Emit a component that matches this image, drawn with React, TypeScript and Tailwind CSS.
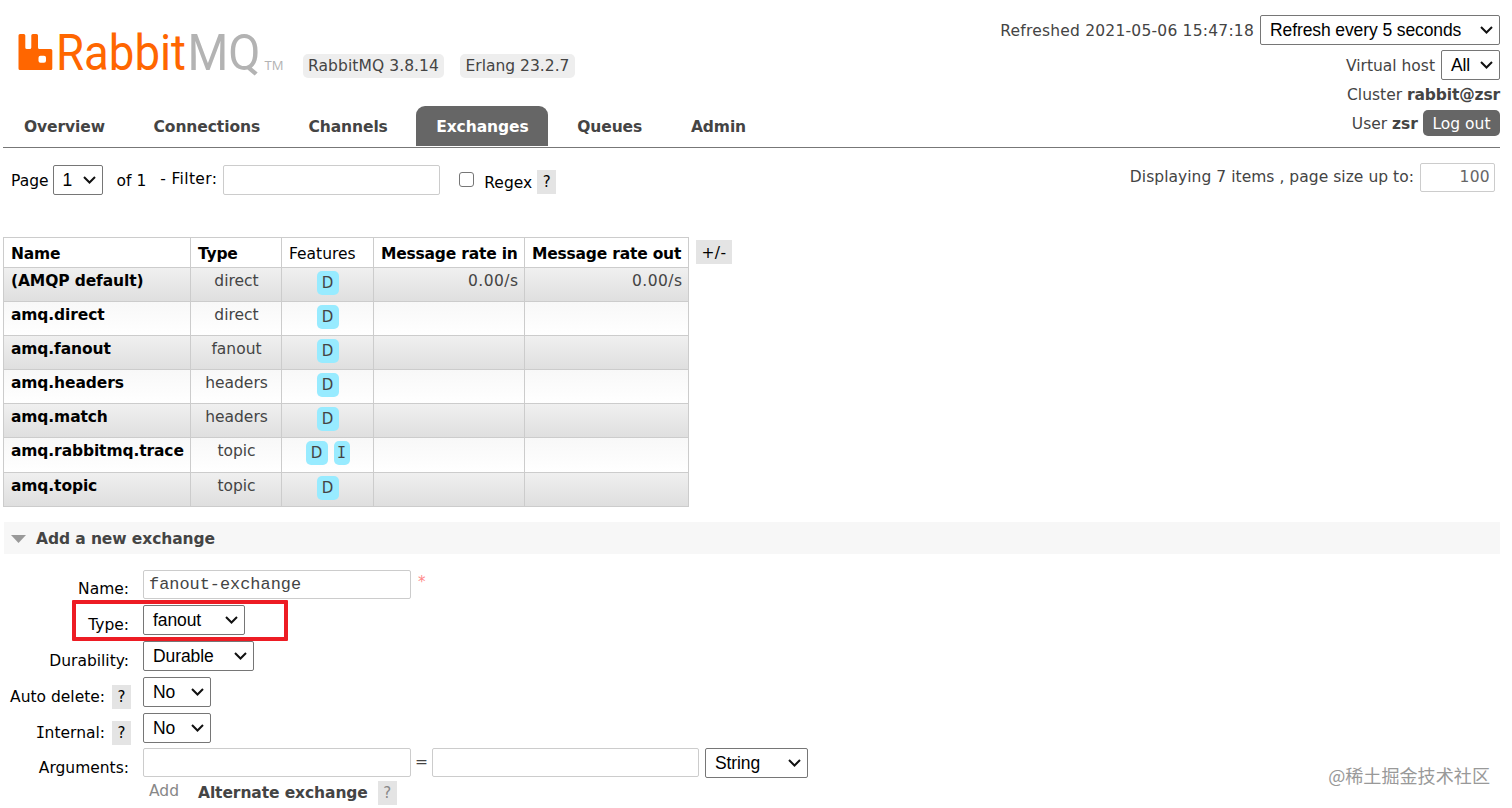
import type { ReactNode } from "react";

const tabs = [
  { label: "Overview", className: "w-[121px]" },
  { label: "Connections", className: "w-[146px]" },
  { label: "Channels", className: "w-[119px]" },
  { label: "Exchanges", className: "w-[132px]", active: true },
  { label: "Queues", className: "w-[105px]" },
  { label: "Admin", className: "w-[95px]" },
];

const exchanges = [
  { name: "(AMQP default)", type: "direct", features: ["D"], rateIn: "0.00/s", rateOut: "0.00/s" },
  { name: "amq.direct", type: "direct", features: ["D"] },
  { name: "amq.fanout", type: "fanout", features: ["D"] },
  { name: "amq.headers", type: "headers", features: ["D"] },
  { name: "amq.match", type: "headers", features: ["D"] },
  { name: "amq.rabbitmq.trace", type: "topic", features: ["D", "I"] },
  { name: "amq.topic", type: "topic", features: ["D"] },
];

function Logo() {
  return (
    <svg width="270" height="70" viewBox="0 -10 270 70" className="-my-[10px]">
      <path
        fill="#ff6600"
        fillRule="evenodd"
        d="M4 4h3.800a1.500 1.500 0 0 1 1.500 1.500V17.500a1.500 1.500 0 0 0 1.500 1.500h3a1.500 1.500 0 0 0 1.500-1.500V5.500a1.500 1.500 0 0 1 1.500-1.500h3.700a1.500 1.500 0 0 1 1.500 1.500V17.500a1.500 1.500 0 0 0 1.500 1.500h11.300a1.500 1.500 0 0 1 1.500 1.500V38.500a1.500 1.500 0 0 1-1.500 1.500H4a1.500 1.500 0 0 1-1.500-1.500V5.500a1.500 1.500 0 0 1 1.500-1.500zM24.500 25.700a2 2 0 0 0-2 2v3a2 2 0 0 0 2 2h3.500a2 2 0 0 0 2-2v-3a2 2 0 0 0-2-2z"
      />
      <g fontFamily="Roboto, sans-serif" fontSize="50">
        <text x="40" y="40" fill="#ff6600" textLength="130" lengthAdjust="spacingAndGlyphs">Rabbit</text>
        <text x="171.500" y="40" fill="#b3b3b3" textLength="73" lengthAdjust="spacingAndGlyphs">MQ</text>
      </g>
      <text x="248.500" y="40" fill="#b3b3b3" fontFamily="Open Sans, sans-serif" fontSize="13" textLength="19" lengthAdjust="spacingAndGlyphs">TM</text>
    </svg>
  );
}

function Select({ children, className }: { children: ReactNode; className: string }) {
  return (
    <div className={`flex h-[30px] shrink-0 items-center justify-between rounded-[2px] border border-[#767676] bg-white pl-[9px] pr-[6px] font-['Liberation_Sans',sans-serif] text-[17.500px] tracking-[-0.1px] text-black ${className}`}>
      <span className="whitespace-nowrap">{children}</span>
      <svg width="13" height="8" viewBox="0 0 13 8" fill="none" stroke="#111" strokeWidth="2">
        <path d="M1 1l5.500 5.500L12 1" />
      </svg>
    </div>
  );
}

function Help({ className = "" }: { className?: string }) {
  return (
    <span className={`inline-flex h-6 w-[19px] shrink-0 items-center justify-center bg-[#e4e4e4] text-[15px] ${className}`}>?</span>
  );
}

// capital I with serifs, as in Verdana
function SerifI() {
  return <span className="-mx-[0.5px] font-['DejaVu_Sans_Mono',monospace]">I</span>;
}

function Field({ label, help, children }: { label: ReactNode; help?: boolean; children: ReactNode }) {
  return (
    <div className="flex h-[35.800px]">
      <div className="flex h-9 w-[129px] shrink-0 items-center justify-end gap-[7px] pt-1 text-black">
        <span>{label}</span>
        {help && <Help className="-mr-[2px]" />}
      </div>
      <div className="flex pl-[14px]">{children}</div>
    </div>
  );
}

export default function App() {
  return (
    <div className="relative h-[808px] w-[1512px] overflow-hidden bg-white font-['DejaVu_Sans',Verdana,sans-serif] text-[15.500px] leading-5 text-[#444]">
      <header className="mx-[3px] mr-3 flex h-[148px] justify-between border-b border-[#777]">
        <div className="flex flex-col justify-between">
          <div className="flex pl-[13px] pt-[30px]">
            <Logo />
            <div className="flex gap-4 pl-[17px] pt-6">
              <span className="flex h-6 w-[141px] items-center justify-center rounded-[5px] bg-[#eee] tracking-[0.08px]">RabbitMQ 3.8.14</span>
              <span className="flex h-6 w-[115px] items-center justify-center rounded-[5px] bg-[#eee]">Erlang 23.2.7</span>
            </div>
          </div>
          <nav className="mb-px flex gap-[8.800px] pl-px font-bold tracking-[-0.08px]">
            {tabs.map((tab) => (
              <a key={tab.label} className={`flex h-10 items-center justify-center rounded-t-[9px] pt-0.5 ${tab.className} ${tab.active ? "bg-[#666] text-white" : ""}`}>
                {tab.label}
              </a>
            ))}
          </nav>
        </div>
        <div className="flex flex-col items-end pt-[15px]">
          <div className="flex items-center gap-1.5">
            <span className="pt-0.5 tracking-[0.22px]">Refreshed 2021-05-06 15:47:18</span>
            <Select className="w-[240px]">Refresh every 5 seconds</Select>
          </div>
          <div className="mt-[5px] flex items-center gap-1.5">
            <span className="pt-0.5">Virtual host</span>
            <Select className="w-[59px]">All</Select>
          </div>
          <div className="mt-[5px]">Cluster <b className="tracking-[-0.14px]">rabbit@zsr</b></div>
          <div className="mt-[5px] flex items-center gap-[5px]">
            <span className="pt-0.5">User <b>zsr</b></span>
            <span className="flex h-[26px] w-[77px] items-center justify-center rounded-[5px] bg-[#666] pt-px text-white">Log out</span>
          </div>
        </div>
      </header>

      <div className="flex h-[89px] justify-between pl-[11px] pr-[17px] pt-[15px] text-black">
        <div className="flex">
          <span className="pt-2">Page</span>
          <Select className="ml-[4px] mt-[2px] w-[50px]">1</Select>
          <span className="ml-[14px] pt-2">of 1</span>
          <span className="ml-[14px] pt-1.5 tracking-[0.35px]">- Filter:</span>
          <div className="ml-[6px] mt-[2px] h-[30px] w-[217px] rounded-[2px] border border-[#ccc]" />
          <span className="ml-[19px] mt-[9px] h-[15px] w-[15px] rounded-[3px] border border-[#767676]" />
          <span className="ml-[10px] pt-[10px]">Regex</span>
          <Help className="ml-[5px] mt-[7px]" />
        </div>
        <div className="flex text-[#444]">
          <span className="pt-1 tracking-[0.04px]">Displaying 7 items , page size up to:</span>
          <div className="ml-1.5 h-[29px] w-[75px] rounded-[2px] border border-[#ccc] pr-1 pt-[3px] text-right tracking-[0.3px] text-[#666]">100</div>
        </div>
      </div>

      <div className="flex pl-[3px]">
        <table className="w-[686px] table-fixed border-collapse">
          <thead>
            <tr className="h-[30px] text-left tracking-[-0.2px] text-black">
              <th className="w-[187px] border border-[#ccc] px-[7px] pt-0.5">Name</th>
              <th className="w-[91px] border border-[#ccc] px-[7px] pt-0.5">Type</th>
              <th className="w-[92px] border border-[#ccc] px-[7px] pt-0.5 font-normal tracking-normal">Features</th>
              <th className="w-[151px] border border-[#ccc] px-[7px] pt-0.5 whitespace-nowrap">Message rate in</th>
              <th className="w-[164px] border border-[#ccc] px-[7px] pt-0.5 whitespace-nowrap">Message rate out</th>
            </tr>
          </thead>
          <tbody>
            {exchanges.map((x) => (
              <tr key={x.name} className="h-[34.100px] align-top odd:bg-linear-to-b odd:from-[#f0f0f0] odd:to-[#dfdfdf] even:bg-linear-to-b even:from-[#f8f8f8] even:to-white">
                <td className="border border-[#ccc] px-[7px] pt-[3px] font-bold tracking-[-0.12px] whitespace-nowrap text-black">{x.name}</td>
                <td className="border border-[#ccc] pt-[3px] pl-px text-center">{x.type}</td>
                <td className="border border-[#ccc] pt-[3px]">
                  <div className="flex justify-center gap-1.5">
                    {x.features.map((f) => (
                      <span key={f} className={`flex h-6 items-center justify-center rounded-[5px] bg-[#98ebff] text-[15px] ${f === "I" ? "w-4" : "w-[22px]"}`}>
                        {f === "I" ? <SerifI /> : f}
                      </span>
                    ))}
                  </div>
                </td>
                <td className="border border-[#ccc] px-[5.500px] pt-[3px] text-right tracking-[0.45px]">{x.rateIn}</td>
                <td className="border border-[#ccc] px-[5.500px] pt-[3px] text-right tracking-[0.45px]">{x.rateOut}</td>
              </tr>
            ))}
          </tbody>
        </table>
        <span className="ml-[7px] mt-[3px] flex h-6 w-[36px] items-center justify-center bg-[#e4e4e4] pt-0.5 tracking-[0.4px] text-black">+/-</span>
      </div>

      <h2 className="mx-[4px] mr-3 mt-[15.400px] flex h-8 items-center gap-[10px] bg-[#f7f7f7] pl-[7px] pt-px font-bold tracking-[-0.09px]">
        <svg width="15" height="8" viewBox="0 0 15 8" fill="#999"><path d="M0 0h15L7.500 8z" /></svg>
        Add a new exchange
      </h2>

      <form className="relative pt-[15.300px]">
        <Field label="Name:">
          <div className="mt-[0.7px] h-[29px] w-[268px] rounded-[2px] border border-[#ccc] pl-[5px] pt-1 font-['Liberation_Mono',monospace] text-[16.900px]">fanout-exchange</div>
          <span className="ml-[7px] pt-[3px] text-[15px] text-[#f88]">*</span>
        </Field>
        <Field label="Type:"><Select className="w-[102px]">fanout</Select></Field>
        <Field label="Durability:"><Select className="w-[111px]">Durable</Select></Field>
        <Field label="Auto delete:" help><Select className="w-[68px]">No</Select></Field>
        <Field label={<><SerifI />nternal:</>} help><Select className="w-[68px]">No</Select></Field>
        <Field label="Arguments:">
          <div className="h-[29px] w-[268px] rounded-[2px] border border-[#ccc]" />
          <span className="w-[21px] pt-1 text-center">=</span>
          <div className="h-[29px] w-[267px] rounded-[2px] border border-[#ccc]" />
          <Select className="ml-[6px] w-[103px]">String</Select>
        </Field>
        <div className="flex pl-[149px]">
          <span className="-mt-[3px] text-[#888]">Add</span>
          <b className="ml-[19px] -mt-px tracking-[-0.1px]">Alternate exchange</b>
          <Help className="ml-[10px] -mt-[3px] text-[#888]" />
        </div>
        {/* highlight around the type field */}
        <div className="absolute left-[72px] top-[46px] h-[41px] w-[216px] rounded-[1px] border-4 border-[#ed1c24]" />
      </form>

      <div className="absolute right-[22px] bottom-[23px] font-['Noto_Sans_CJK_SC',sans-serif] text-[18.100px] text-[#999]">@稀土掘金技术社区</div>
    </div>
  );
}
